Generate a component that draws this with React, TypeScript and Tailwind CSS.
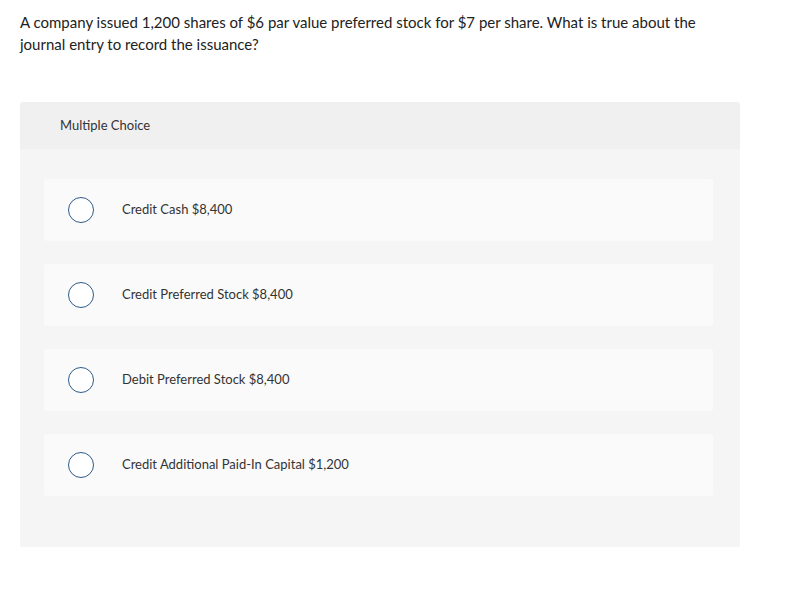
const options = [
  "Credit Cash $8,400",
  "Credit Preferred Stock $8,400",
  "Debit Preferred Stock $8,400",
  "Credit Additional Paid-In Capital $1,200",
];

export default function App() {
  return (
    <div className="min-h-[608px] w-[790px] bg-white text-[#222] [font-family:Lato,'Open_Sans',sans-serif]">
      <div className="px-5 pt-[11px]">
        <p className="w-[690px] text-[15px] leading-[22px]">
          A company issued 1,200 shares of $6 par value preferred stock for $7 per share. What is true about the
          journal entry to record the issuance?
        </p>
      </div>

      <div className="ml-5 mt-[47px] w-[720px] overflow-hidden rounded-[3px] bg-[#f5f5f5]">
        <div className="flex h-[47px] items-center bg-[#f0f0f0] pl-10 text-[13px] text-[#333]">Multiple Choice</div>
        <div className="flex flex-col gap-[23px] pt-[30px] pb-[51px] pl-6 pr-[27px]">
          {options.map((o) => (
            <div key={o} className="flex h-[62px] items-center rounded-[3px] bg-[#fafafa]">
              <span className="ml-6 h-[26px] w-[26px] shrink-0 rounded-full border-[1.5px] border-[#2d5b88] bg-white" />
              <span className="ml-[28px] text-[13px] text-[#333]">{o}</span>
            </div>
          ))}
        </div>
      </div>
    </div>
  );
}
